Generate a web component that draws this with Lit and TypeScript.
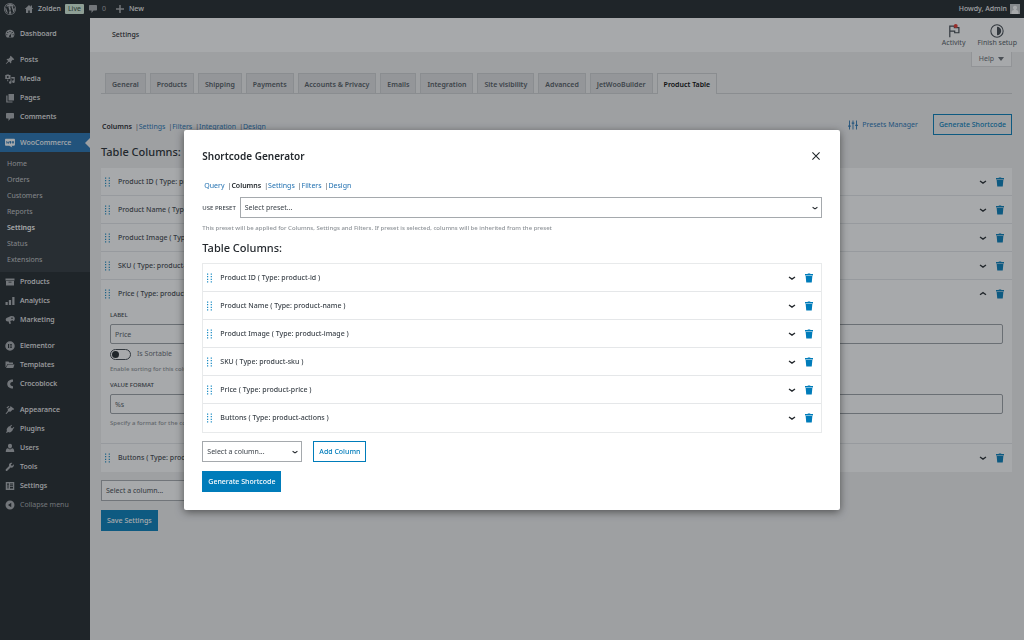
import { LitElement, html, css, svg, nothing, type TemplateResult } from "lit";
import { customElement, property } from "lit/decorators.js";
import { classMap } from "lit/directives/class-map.js";

const glyphs: Record<string, TemplateResult> = {
  wordpress: svg`<path fill-rule="evenodd" d="M10 0a10 10 0 1 0 0 20 10 10 0 0 0 0-20zm0 1.200a8.800 8.800 0 1 1 0 17.600 8.800 8.800 0 0 1 0-17.600z"/><path d="M2.900 6.800A7.800 7.800 0 0 0 6.700 17.100zM3.500 5.700h4.800v.8l-1 .1 2.600 8.200 1.600-4.800-1.200-3.400-.9-.1v-.8h4.400v.8l-1.200.1 2.600 8 .9-3.200c.6-2-1-3.100-1-4.500 0-1.200.8-2 1.600-2A7.900 7.900 0 0 0 3.500 5.700zM10.200 11l-2.300 6.600c1.500.4 3.200.4 4.700-.1zM17 6.800c.2 3-1.600 5.900-2.600 9.800A7.900 7.900 0 0 0 17 6.800z"/>`,
  home: svg`<path d="M10 2 1.500 10H4v8h4.500v-5h3v5H16v-8h2.500L16 7.600V3h-2.500v2.300z"/>`,
  comment: svg`<path d="M3.500 2h13A1.500 1.500 0 0 1 18 3.500v8a1.500 1.500 0 0 1-1.500 1.500H11l-4 5v-5H3.500A1.500 1.500 0 0 1 2 11.500v-8A1.500 1.500 0 0 1 3.500 2z"/>`,
  plus: svg`<path d="M8.500 2h3v6.500H18v3h-6.500V18h-3v-6.500H2v-3h6.500z"/>`,
  dashboard: svg`<path fill-rule="evenodd" d="M3.800 17h12.400A9 9 0 1 0 3.800 17zM9 4h2v2H9zM4.500 6h2v2h-2zm9 0h2v2h-2zM2.700 10.500h2v2h-2zm12.600 0h2v2h-2zM13 7.500l-1.200 6a2 2 0 1 1-2-1z"/>`,
  pin: svg`<path d="m11.500 1.500 7 7-1.500 1.300-1.500-.3-3 3c.5 1.700.2 3.200-.8 4.300l-3.600-3.600L2.500 18l-1-.5 4.800-5.600L2.900 8.500c1.200-1 2.700-1.300 4.300-.8l3-3-.2-1.700z"/>`,
  media: svg`<path fill-rule="evenodd" d="M.5 2h2l.8-1h4l.8 1H11v8H.500zM5.500 4a2 2 0 1 0 0 4 2 2 0 0 0 0-4zM12.500 6H19.500v9.500a2.700 2.700 0 1 1-2.200-2.700V9h-4.800zM4.500 11h2v3.500h4.500V10.500h2V17a2.600 2.600 0 1 1-2-2.500H4.500z"/>`,
  pages: svg`<path d="M7 2h11v13H7z"/><path d="M2.500 5H5v12h10v2H2.500z"/>`,
  woo: svg`<path fill-rule="evenodd" d="M2 1.500h16c1 0 1.900.8 1.900 1.900v10c0 1-.8 1.900-1.900 1.900h-5L14.500 19l-6-3.700H2c-1 0-1.900-.8-1.900-1.900v-10c0-1 .8-1.900 1.900-1.900zM2 6l1.300 5.500h1L5.700 9l1 2.500h1L9 6H7.800L7 9.500 6.200 7H5.300L4 9.500 3.200 6zm9 0a1.800 2.700 0 1 0 0 5.400A1.800 2.700 0 0 0 11 6zm5 0a1.800 2.700 0 1 0 0 5.400A1.800 2.700 0 0 0 16 6z"/>`,
  products: svg`<path fill-rule="evenodd" d="M1 3h18v4H1zm1 5h16v9H2zm5 1.500v1.700h6V9.500z"/>`,
  analytics: svg`<path d="M1 12h4.500v6H1zM7.700 8h4.500v10H7.700zM14.500 2H19v16h-4.500z"/>`,
  marketing: svg`<path d="M17 2.500a6 6 0 0 1 0 10l-2-2-4.500 1.300 1.500 5-3 1-2.300-5.200C3.700 13.500 1.800 12 1.500 9.500 1.200 7 3 5.500 5.500 5L12 2z"/><circle cx="14" cy="6.500" r="1.600" fill="#1d2327"/>`,
  elementor: svg`<path fill-rule="evenodd" d="M10 .5a9.500 9.500 0 1 0 0 19 9.500 9.500 0 0 0 0-19zM6 6h2v8H6zm3.500 0H14v1.700H9.500zm0 3.200H14v1.700H9.500zm0 3.200H14V14H9.500z"/>`,
  folder: svg`<path d="M1 3h6l1.500 2H16v3H5L1.800 14H1z"/><path d="M5.700 9H19l-2.500 7H2z"/>`,
  croco: svg`<path d="M16 1v4.500c-3.500.2-5.500 1.900-5.500 4.500s2 4.300 5.500 4.500V19C9 19 4.500 15.500 4.500 10S9 1 16 1z"/>`,
  brush: svg`<path d="m11 2 7.500 6-1.500 1.700-2-.4-4 4.200-3.500-.7L2.800 18 1 17.300l4.700-5.800L5.500 8l4.700-3.200z"/><path d="m3 5 4-3 2 1.200-4.500 4z"/>`,
  plug: svg`<path d="m12.500 1.500 1.500 1.300-3 3.400 3 2.800 3.300-3 1.400 1.500-3.400 3 .9 1-3.700 4.200c-2 1.500-4.500 1.500-6.300.3L3.500 18 2 16.500l2-2.600c-1-2-.9-4.200.7-6L8.300 4l1 1z"/>`,
  user: svg`<path d="M10 1.500c2.600 0 4 1.800 4 4.300S12.300 11 10 11 6 8.300 6 5.800s1.400-4.300 4-4.300zM5.500 10.500 10 13l4.500-2.500C17 11 18.500 13 18.500 18h-17c0-5 1.500-7 4-7.500z"/>`,
  wrench: svg`<path d="M17.500 4.500 14.500 7.500 12.300 7l-.5-2 3-3c-2-.8-4.200-.3-5.600 1-1.300 1.400-1.600 3.300-1 5L1.700 14.500c-.7.700-.7 2 0 2.800s2.100.8 2.900 0L11 11c1.800.6 3.800.3 5.200-1.100 1.500-1.500 2-3.600 1.300-5.400z"/>`,
  sliders: svg`<path fill-rule="evenodd" d="M1.500 2h17v16h-17zM4 5v2h1v8h2V7h1V5zm6 0v2h6V5zm0 3.500v2h6v-2zM10 12v3h6v-3z"/>`,
  collapse: svg`<path fill-rule="evenodd" d="M10 1a9 9 0 1 0 0 18 9 9 0 0 0 0-18zm2.500 4.500v9L6 10z"/>`,
  trash: svg`<path d="M7.500 1h5v1.200H18v2.600H2V2.200h5.500zM3.300 6h13.400l-1.200 13h-11z"/>`,
  down: svg`<path d="m4 8 6 4.200L16 8" fill="none" stroke="currentColor" stroke-width="2.600"/>`,
  up: svg`<path d="m4 11.500 6-4.200 6 4.200" fill="none" stroke="currentColor" stroke-width="2.600"/>`,
  close: svg`<path d="m1 1 18 18m0-18L1 19" fill="none" stroke="currentColor" stroke-width="2.600"/>`,
  grip: svg`<path d="M4 1h2.400v2.400H4zM11.400 1h2.400v2.400h-2.400zM4 6.200h2.400v2.400H4zM11.400 6.200h2.400v2.400h-2.400zM4 11.400h2.400v2.400H4zM11.400 11.400h2.400v2.400h-2.400zM4 16.600h2.400V19H4zM11.400 16.600h2.400V19h-2.400z"/>`,
  presets: svg`<path d="M2 1h1.800v10h1.700v2.500H3.800V19H2v-5.500H.300V11H2zM9.100 1h1.800v4h1.700v2.500h-1.700V19H9.100V7.500H7.400V5h1.700zM16.200 1H18v8.500h1.700V12H18v7h-1.800v-7h-1.700V9.500h1.700z"/>`,
  flag: svg`<path d="M4 19V3h6.500v2.300H17v7.200h-6v-2.200H4" fill="none" stroke="currentColor" stroke-width="1.700"/><circle cx="12.500" cy="2.800" r="2.800" fill="#e8332a"/>`,
  half: svg`<circle cx="10" cy="10" r="8.800" fill="none" stroke="currentColor" stroke-width="1.500"/><path d="M10 4a6 6 0 0 1 0 12z"/>`,
  person: svg`<path fill="#c9cacb" d="M0 0h20v20H0z"/><path fill="#fff" d="M10 3.500a4 4 0 0 1 2.500 7.200V12c2.500.6 4.500 2 4.500 5v3H3v-3c0-3 2-4.400 4.500-5v-1.300A4 4 0 0 1 10 3.500z"/>`,
};

const icon = (name: string, size = "m") =>
  html`<svg class="icon ${size}" viewBox="0 0 20 20" fill="currentColor" aria-hidden="true">${glyphs[name]}</svg>`;

const shared = css`
  * { box-sizing: border-box; }
  a { color: inherit; text-decoration: none; }
  ul { list-style: none; margin: 0; padding: 0; }
  h1, h2, p { margin: 0; }
  button, input, select { font: inherit; color: inherit; margin: 0; border-radius: 0; }
  .icon { display: block; flex: none; width: 10px; height: 10px; }
  .icon.s { width: 8px; height: 8px; }
  .icon.xl { width: 12px; height: 12px; }
  .icon.l { width: 14px; height: 14px; }
  .heading { font-size: 11px; line-height: 16px; font-weight: 500; color: #23282d; }
  .heading.title { font-size: 10px; font-weight: 600; }
  .btn {
    height: 21px; padding: 0 5px; border: 1px solid #007cba; background: transparent;
    color: #007cba; white-space: nowrap; cursor: pointer; font-weight: 500;
  }
  .btn.primary { background: #007cba; color: #fff; }
  .subnav { display: flex; line-height: 12px; color: #23282d; }
  .subnav li + li::before { content: "|"; margin: 0 0 0 3px; color: #50575e; }
  .subnav a { color: #2271b1; }
  .subnav a.current { color: #1d2327; font-weight: 600; }
`;

@customElement("select-box")
export class SelectBox extends LitElement {
  @property() label = "";
  @property() placeholder = "";
  static styles = [shared, css`
    :host { display: block; }
    .box { display: grid; align-items: center; }
    .box > * { grid-area: 1 / 1; }
    select {
      width: 100%; height: 21px; padding: 1px 16px 0 4px; border: 1px solid #a5a9ad;
      background: #fff; appearance: none; color: #3c434a;
    }
    .icon { justify-self: end; margin-right: 3px; pointer-events: none; color: #23282d; }
  `];
  render() {
    return html`<div class="box">
      <select aria-label=${this.label}><option>${this.placeholder}</option></select>
      ${icon("down", "s")}
    </div>`;
  }
}

interface Column { name: string; type: string; open?: boolean; }

const columns: Column[] = [
  { name: "Product ID", type: "product-id" },
  { name: "Product Name", type: "product-name" },
  { name: "Product Image", type: "product-image" },
  { name: "SKU", type: "product-sku" },
  { name: "Price", type: "product-price" },
  { name: "Buttons", type: "product-actions" },
];

@customElement("column-list")
export class ColumnList extends LitElement {
  @property({ type: Array }) items: Column[] = [];
  @property({ type: Boolean, reflect: true }) bordered = false;
  static styles = [shared, css`
    :host { display: block; background: #fff; }
    :host([bordered]) { border: 1px solid #e8eaeb; }
    .item + .item { border-top: 1px solid #e5e7e9; }
    .row { display: flex; align-items: center; height: 27px; padding: 0 7px 0 2px; }
    .item:last-child .row { height: 28px; }
    .grip { color: #1a8bc4; cursor: grab; }
    .name { flex: 1; margin-left: 5px; font-weight: 500; color: #3c434a; }
    .act { border: 0; padding: 0; background: none; cursor: pointer; color: #23282d; margin-left: 7px; }
    .act.del { color: #007cba; }
    .fields { display: flex; flex-direction: column; padding: 0 9px 12px; }
    .caps { font-size: 6px; line-height: 10px; font-weight: 500; color: #3c434a; text-transform: uppercase; margin: 3px 0 4px; }
    .text { height: 20px; padding: 1px 4px 0; border: 1px solid #999ea3; border-radius: 2px; background: #fff; color: #50575e; width: 100%; }
    .hint { font-size: 6px; line-height: 10px; font-weight: 500; color: #8c9196; margin: 4px 0 3px; }
    .switch { display: flex; align-items: center; gap: 6px; line-height: 12px; margin-top: 4px; color: #646970; }
    .toggle {
      appearance: none; width: 21px; height: 11px; border: 1px solid #3c434a;
      border-radius: 6px; background: #fff; display: flex; align-items: center; padding: 0 1px;
    }
    .toggle::before { content: ""; width: 7px; height: 7px; border-radius: 50%; background: #1d2327; }
  `];
  private fields() {
    return html`<div class="fields">
      <label class="caps" for="label">Label</label>
      <input class="text" id="label" type="text" value="Price" />
      <label class="switch"><input class="toggle" type="checkbox" role="switch" />Is Sortable</label>
      <p class="hint">Enable sorting for this column</p>
      <label class="caps" for="format">Value format</label>
      <input class="text" id="format" type="text" value="%s" />
      <p class="hint">Specify a format for the column value</p>
    </div>`;
  }
  render() {
    return html`<ul>${this.items.map((c) => html`<li class="item">
      <div class="row">
        <span class="grip">${icon("grip")}</span>
        <span class="name">${c.name} ( Type: ${c.type} )</span>
        <button class="act" aria-label="Toggle ${c.name}">${icon(c.open ? "up" : "down")}</button>
        <button class="act del" aria-label="Remove ${c.name}">${icon("trash")}</button>
      </div>
      ${c.open ? this.fields() : nothing}
    </li>`)}</ul>`;
  }
}

const menu: [string, string][][] = [
  [["dashboard", "Dashboard"]],
  [["pin", "Posts"], ["media", "Media"], ["pages", "Pages"], ["comment", "Comments"]],
  [["woo", "WooCommerce"], ["products", "Products"], ["analytics", "Analytics"], ["marketing", "Marketing"]],
  [["elementor", "Elementor"], ["folder", "Templates"], ["croco", "Crocoblock"]],
  [["brush", "Appearance"], ["plug", "Plugins"], ["user", "Users"], ["wrench", "Tools"], ["sliders", "Settings"]],
];
const submenu = ["Home", "Orders", "Customers", "Reports", "Settings", "Status", "Extensions"];
const tabs = ["General", "Products", "Shipping", "Payments", "Accounts & Privacy", "Emails", "Integration",
  "Site visibility", "Advanced", "JetWooBuilder", "Product Table"];

@customElement("app-root")
export class AppRoot extends LitElement {
  static styles = [shared, css`
    :host {
      display: flex; flex-direction: column; min-height: 100vh; background: #f0f0f1; color: #3c434a;
      font: 7px/12px "Noto Sans", "Open Sans", sans-serif;
    }
    .bar { display: flex; align-items: center; height: 18px; padding: 0 4px; background: #1d2327; color: #f0f0f1; font-weight: 500; }
    .bar a { display: flex; align-items: center; gap: 4px; }
    .bar .icon { color: #a7aaad; }
    .bar .site { margin: 0 4px 0 8px; }
    .bar .badge { padding: 0 3px; line-height: 10px; border-radius: 1px; background: #d6eedb; color: #2c4733; font-weight: 400; }
    .bar .num { margin: 0 9px 0 4px; color: #a7aaad; font-weight: 400; }
    .bar .me { margin-left: auto; gap: 3px; }
    .cols { display: flex; flex: 1; }
    .side { width: 90px; flex: none; background: #1d2327; color: #f0f0f1; padding-top: 6px; }
    .side .group + .group { margin-top: 7px; }
    .side a.top, .side .fold { display: flex; align-items: center; gap: 5px; height: 19px; padding: 0 5px; font-weight: 500; }
    .side .icon { color: #a7aaad; }
    .side .fold { border: 0; background: none; color: #a7aaad; font-weight: 400; }
    .side a.top.current { background: #2271b1; color: #fff; }
    .side a.top.current .icon { color: #fff; }
    .side a.top.current::after {
      content: ""; margin: 0 -5px 0 auto; border: 5px solid transparent; border-left: 0; border-right-color: #f0f0f1;
    }
    .sub { background: #2c3338; padding: 4px 0; color: #c3c4c7; }
    .sub a { display: block; line-height: 16px; padding: 0 7px; }
    .sub a.current { color: #fff; font-weight: 600; }
    .main { flex: 1; min-width: 0; }
    .top-row { display: flex; align-items: center; height: 34px; padding: 0 7px 0 22px; background: #fff; }
    .top-row h1 { flex: 1; font-size: 7px; font-weight: 500; line-height: 12px; color: #1d2327; }
    .quick { display: flex; flex-direction: column; align-items: center; line-height: 10px; margin-left: 12px; padding: 1px 0 0; border: 0; background: none; color: #50575e; }
    .quick .icon { color: #3c434a; }
    .content { padding: 0 12px 24px 11px; }
    .help { display: flex; align-items: center; gap: 4px; margin-left: auto; height: 15px; padding: 0 7px; background: #fff; border: 1px solid #dcdcde; border-top: 0; color: #646970; }
    .caret { border: 3px solid transparent; border-top: 4px solid #646970; border-bottom: 0; }
    .tabs { display: flex; gap: 4px; margin-top: 6px; padding-left: 4px; border-bottom: 1px solid #cfd0d3; }
    .tabs a { height: 20px; padding: 0 6px; line-height: 21px; border: 1px solid #cfd0d3; border-bottom: 0; background: #dfdfe1; color: #50575e; font-weight: 600; white-space: nowrap; }
    .tabs a.current { background: #f0f0f1; color: #000; margin-bottom: -1px; height: 21px; }
    .tools { display: flex; align-items: center; margin-top: 20px; }
    .tools .subnav { flex: 1; padding: 4px 1px 0; }
    .tools .manage { display: flex; align-items: center; gap: 4px; margin-right: 15px; color: #2271b1; }
    .content .heading { margin: 9px 0 8px; }
    .adder { display: flex; gap: 11px; margin: 8px 0 9px; }
    .adder select-box { width: 100px; }
    .shade { position: fixed; inset: 0; display: flex; align-items: center; justify-content: center; background: rgba(35, 40, 45, 0.4); }
    .dialog { width: 64%; min-width: 320px; padding: 18px; background: #fff; border-radius: 2px; box-shadow: 0 2px 8px rgba(0, 0, 0, 0.5); }
    .dialog header { display: flex; align-items: center; justify-content: space-between; padding-right: 2px; }
    .x { border: 0; padding: 0; background: none; color: #1d2327; }
    .dialog .subnav { margin: 16px 2px 5px; }
    .preset { display: flex; align-items: center; gap: 4px; }
    .preset span { font-size: 6px; font-weight: 500; }
    .preset select-box { flex: 1; }
    .note { font-size: 6px; line-height: 12px; font-weight: 500; margin: 4px 0 6px; color: #8c9196; }
    .dialog column-list { margin-top: 7px; }
  `];

  private nav(names: string[], current: string) {
    return html`<ul class="subnav">${names.map((n) => html`<li><a href="#" class=${classMap({ current: n === current })}>${n}</a></li>`)}</ul>`;
  }

  private adder(withLabel: string) {
    return html`<div class="adder">
      <select-box label=${withLabel} placeholder="Select a column..."></select-box>
      <button class="btn">Add Column</button>
    </div>`;
  }

  render() {
    const pageColumns = columns.map((c) => ({ ...c, open: c.name === "Price" }));
    return html`
      <div class="bar">
        <a href="#" aria-label="WordPress">${icon("wordpress", "xl")}</a>
        <a href="#" class="site">${icon("home")}Zolden</a>
        <span class="badge">Live</span>
        <a href="#" class="num">${icon("comment")}0</a>
        <a href="#">${icon("plus")}New</a>
        <a href="#" class="me">Howdy, Admin ${icon("person")}</a>
      </div>
      <div class="cols">
        <nav class="side">
          ${menu.map((g) => html`<div class="group">${g.map(([i, n]) => html`
            <a href="#" class=${classMap({ top: true, current: n === "WooCommerce" })}>${icon(i)}${n}</a>
            ${n === "WooCommerce"
              ? html`<div class="sub">${submenu.map((s) => html`<a href="#" class=${classMap({ current: s === "Settings" })}>${s}</a>`)}</div>`
              : nothing}`)}</div>`)}
          <button class="fold">${icon("collapse")}Collapse menu</button>
        </nav>
        <main class="main">
          <div class="top-row">
            <h1>Settings</h1>
            <button class="quick">${icon("flag", "l")}Activity</button>
            <button class="quick">${icon("half", "l")}Finish setup</button>
          </div>
          <div class="content">
            <button class="help">Help <span class="caret"></span></button>
            <nav class="tabs">${tabs.map((t) => html`<a href="#" class=${classMap({ current: t === "Product Table" })}>${t}</a>`)}</nav>
            <div class="tools">
              ${this.nav(["Columns", "Settings", "Filters", "Integration", "Design"], "Columns")}
              <a href="#" class="manage">${icon("presets")}Presets Manager</a>
              <button class="btn">Generate Shortcode</button>
            </div>
            <h2 class="heading">Table Columns:</h2>
            <column-list .items=${pageColumns}></column-list>
            ${this.adder("Column to add")}
            <button class="btn primary">Save Settings</button>
          </div>
        </main>
      </div>
      <div class="shade">
        <section class="dialog" role="dialog" aria-label="Shortcode Generator">
          <header>
            <h2 class="heading title">Shortcode Generator</h2>
            <button class="x" aria-label="Close">${icon("close", "s")}</button>
          </header>
          ${this.nav(["Query", "Columns", "Settings", "Filters", "Design"], "Columns")}
          <div class="preset">
            <span>USE PRESET</span>
            <select-box label="Use preset" placeholder="Select preset..."></select-box>
          </div>
          <p class="note">This preset will be applied for Columns, Settings and Filters. If preset is selected, columns will be inherited from the preset</p>
          <h2 class="heading">Table Columns:</h2>
          <column-list bordered .items=${columns}></column-list>
          ${this.adder("Column to add to the shortcode")}
          <button class="btn primary">Generate Shortcode</button>
        </section>
      </div>`;
  }
}
